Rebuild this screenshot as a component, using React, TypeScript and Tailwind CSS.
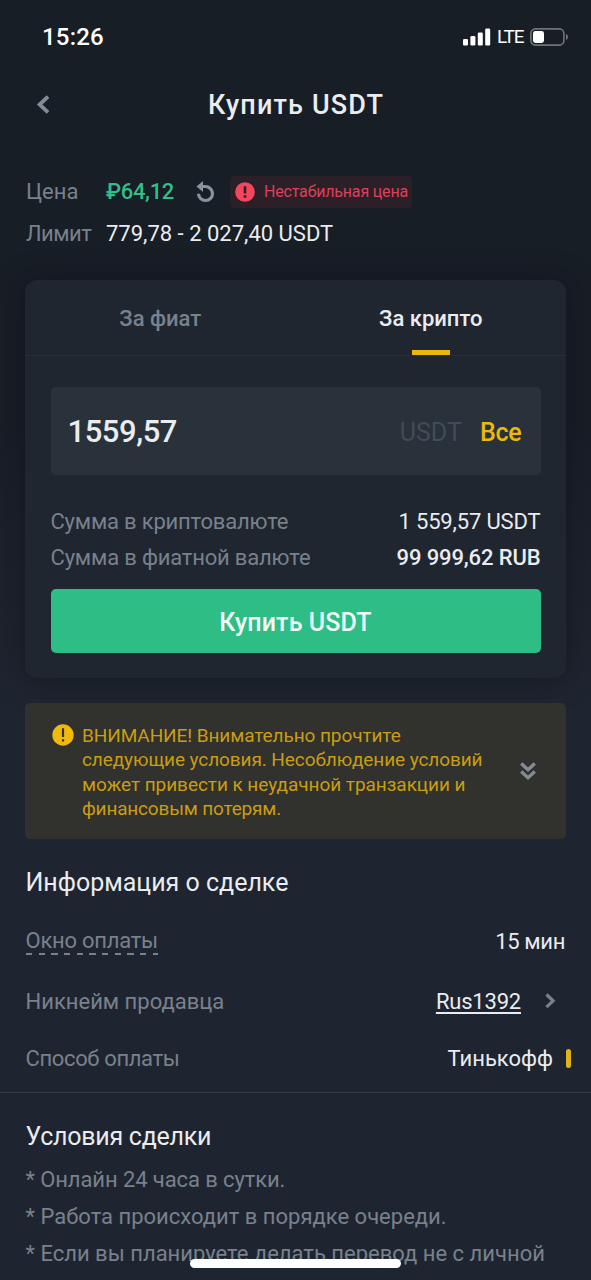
import { useState } from "react";

type Tab = "fiat" | "crypto";

const terms = [
  { text: "* Онлайн 24 часа в сутки.", tracking: "tracking-[-0.1px]" },
  { text: "* Работа происходит в порядке очереди.", tracking: "tracking-normal" },
  { text: "* Если вы планируете делать перевод не с личной", tracking: "tracking-normal" },
];

function StatusBar() {
  return (
    <div className="flex h-[74px] shrink-0 items-center justify-between pl-[42px] pr-[23px] text-white">
      <span className="text-2xl font-medium tracking-[0.2px]">15:26</span>
      <div className="flex items-center">
        <svg width="28" height="18" viewBox="0 0 28 18" fill="currentColor">
          <rect x="0" y="11" width="5" height="6.5" rx="1.3" />
          <rect x="7.4" y="8" width="5" height="9.5" rx="1.3" />
          <rect x="14.8" y="4.5" width="5" height="13" rx="1.3" />
          <rect x="22.2" y="0.5" width="5" height="17" rx="1.3" />
        </svg>
        <span className="ml-[6px] w-[27px] text-[19px] tracking-[-1.1px]">LTE</span>
        <svg className="ml-[6px]" width="38" height="18" viewBox="0 0 38 18" fill="none">
          <rect x="0.9" y="0.9" width="33" height="16.2" rx="4.5" stroke="#6f747b" strokeWidth="1.6" />
          <rect x="3" y="3" width="11" height="12" rx="2.4" fill="#fff" />
          <path d="M36 6v6c1.3-.5 2-1.7 2-3s-.7-2.5-2-3z" fill="#6f747b" />
        </svg>
      </div>
    </div>
  );
}

function Header() {
  return (
    <div className="grid h-[62px] shrink-0 grid-cols-[60px_1fr_60px] items-center">
      <button className="pl-9 text-[#848b96]">
        <svg width="14" height="20" viewBox="0 0 14 20" fill="none" stroke="currentColor" strokeWidth="3.8">
          <path d="M12 1.6 3.6 9.5l8.400 7.900" />
        </svg>
      </button>
      <h1 className="pl-px text-center text-[27px] font-medium tracking-[1.15px] text-[#eaecef]">Купить USDT</h1>
    </div>
  );
}

function PriceInfo() {
  return (
    <div className="mt-[35px] shrink-0 pl-[26px]">
      <div className="flex h-[41px] items-center text-[22px]">
        <span className="w-[80px] text-[#78818c]">Цена</span>
        <span className="w-[89px] font-medium tracking-[-0.35px] text-[#33bd87]">₽64,12</span>
        <svg width="20" height="22" viewBox="0 0 20 22" fill="none">
          <path d="M5 5.500h5.500a7 7 0 1 1-7 7.300" stroke="#8b929c" strokeWidth="3.200" />
          <path d="M8 0v11L1.500 5.500z" fill="#8b929c" />
        </svg>
        <div className="ml-[15px] flex h-[32px] items-center rounded-sm bg-[#2b2028] pl-[5px] pr-1 text-base text-[#dd4058]">
          <svg width="20" height="20" viewBox="0 0 20 20">
            <circle cx="10" cy="10" r="9.800" fill="#f6465d" />
            <path d="M8.700 4.200h2.600v7.200H8.700zM8.700 13.200h2.600v2.500H8.700z" fill="#2d2028" />
          </svg>
          <span className="ml-[9px] pt-px tracking-[-0.18px]">Нестабильная цена</span>
        </div>
      </div>
      <div className="flex h-[43px] items-center text-[22px]">
        <span className="w-[80px] tracking-[-0.5px] text-[#78818c]">Лимит</span>
        <span className="text-[#eaecef]">779,78 - 2 027,40 USDT</span>
      </div>
    </div>
  );
}

function TradeCard() {
  const [tab, setTab] = useState<Tab>("crypto");
  const [amount, setAmount] = useState("1559,57");

  return (
    <div className="mx-[25px] mt-[25px] h-[398px] shrink-0 rounded-xl bg-[#1f2630] shadow-[0_2px_28px_rgba(10,14,19,0.5)]">
      <div className="grid h-[76px] grid-cols-2 border-b border-[#262e38] text-[22px] font-medium">
        <button
          onClick={() => setTab("fiat")}
          className={`flex flex-col items-center ${tab === "fiat" ? "text-[#eaecef]" : "text-[#78818c]"}`}
        >
          <span className="h-[70px] leading-[78px]">За фиат</span>
          {tab === "fiat" && <span className="h-[5px] w-[38px] bg-[#e9b90f]" />}
        </button>
        <button
          onClick={() => setTab("crypto")}
          className={`flex flex-col items-center ${tab === "crypto" ? "text-[#eaecef]" : "text-[#78818c]"}`}
        >
          <span className="h-[70px] leading-[78px]">За крипто</span>
          {tab === "crypto" && <span className="h-[5px] w-[38px] bg-[#e9b90f]" />}
        </button>
      </div>

      <div className="px-[25.5px] pt-[31px]">
        <div className="flex h-[88px] items-center rounded-[5px] bg-[#29313b] pl-[17px] pr-[19px] pt-[3px]">
          <input
            value={amount}
            onChange={(e) => setAmount(e.target.value)}
            className="min-w-0 flex-1 bg-transparent text-[31px] font-medium tracking-[-0.45px] text-[#eaecef] outline-none"
          />
          <span className="text-[25px] text-[#434b56]">USDT</span>
          <button className="ml-[18px] text-[25px] font-medium tracking-[-0.2px] text-[#e9b90f]">Все</button>
        </div>

        <div className="mt-[29px] text-[22px]">
          <div className="flex h-[35px] items-center justify-between">
            <span className="tracking-[-0.2px] text-[#78818c]">Сумма в криптовалюте</span>
            <span className="tracking-[-0.15px] text-[#eaecef]">1 559,57 USDT</span>
          </div>
          <div className="flex h-[36px] items-center justify-between">
            <span className="tracking-[-0.18px] text-[#78818c]">Сумма в фиатной валюте</span>
            <span className="font-medium tracking-[-0.12px] text-[#eaecef]">99 999,62 RUB</span>
          </div>
        </div>

        <button className="mt-[14px] h-[64px] w-full rounded-[5px] bg-[#2ebd85] pt-[3px] text-[25px] font-medium tracking-[0.1px] text-[#f0fbf6]">
          Купить USDT
        </button>
      </div>
    </div>
  );
}

function Warning() {
  return (
    <div className="mx-[25px] mt-[25px] flex h-[136px] shrink-0 rounded-[5px] bg-[#31312d] pl-[27px] pt-[20px]">
      <svg className="mt-px" width="22" height="22" viewBox="0 0 22 22">
        <circle cx="11" cy="11" r="10.700" fill="#f0b90b" />
        <path d="M9.900 4.200h2.200v8.800H9.900zM9.900 15.200h2.200v2.400H9.900z" fill="#31312d" />
      </svg>
      <p className="ml-2 w-[438px] whitespace-nowrap pt-[0.5px] text-[19px] leading-[24.6px] tracking-[-0.09px] text-[#c99d14]">
        ВНИМАНИЕ! Внимательно прочтите
        <br />
        следующие условия. Несоблюдение условий
        <br />
        <span className="tracking-[-0.05px]">может привести к неудачной транзакции и</span>
        <br />
        <span className="tracking-[-0.18px]">финансовым потерям.</span>
      </p>
      <svg className="mt-[39px]" width="16" height="19" viewBox="0 0 16 19" fill="none" stroke="#848b96" strokeWidth="3.400">
        <path d="m1.200 1.600 6.800 6.200 6.800-6.200M1.200 9.600 8 15.800l6.800-6.200" />
      </svg>
    </div>
  );
}

function DealInfo() {
  return (
    <div className="shrink-0 border-b border-[#353e48] pl-[25.5px] text-[22px] text-[#eaecef]">
      <h2 className="mt-[25px] h-[38px] text-[25px] leading-[38px]">Информация о сделке</h2>
      <div className="mt-[19px] flex h-[40px] items-center justify-between pr-[26px]">
        <div className="pb-px text-[#78818c]">
          <div className="h-[27px] leading-[30px] tracking-[-0.25px]">Окно оплаты</div>
          <div className="h-[2px] bg-[repeating-linear-gradient(90deg,#78818c_0_6.4px,transparent_6.4px_12.65px)]" />
        </div>
        <span className="tracking-[-0.35px]">15 мин</span>
      </div>
      <div className="mt-[20px] flex h-[40px] items-center pr-[35px]">
        <span className="flex-1 text-[#78818c]">Никнейм продавца</span>
        <a className="tracking-[-0.2px] underline decoration-2 underline-offset-[3px]">Rus1392</a>
        <svg className="ml-[24px]" width="11" height="16" viewBox="0 0 11 16" fill="none" stroke="#78818c" strokeWidth="3.200">
          <path d="m1.500 1.500 6.600 6.300-6.600 6.300" />
        </svg>
      </div>
      <div className="mt-[17px] flex h-[40px] items-center pr-[20px]">
        <span className="flex-1 tracking-[-0.36px] text-[#78818c]">Способ оплаты</span>
        <span>Тинькофф</span>
        <span className="ml-[13px] h-[19px] w-[5px] rounded-full bg-[#e0b416]" />
      </div>
      <div className="h-[14px]" />
    </div>
  );
}

function Terms() {
  return (
    <div className="shrink-0 px-[25.5px]">
      <h2 className="mt-[25px] h-[38px] text-[25px] leading-[38px] tracking-[-0.25px] text-[#eaecef]">Условия сделки</h2>
      <div className="mt-[6px] text-[22px] text-[#78818c]">
        {terms.map((item) => (
          <p key={item.text} className={`h-[36.8px] whitespace-nowrap leading-[36.8px] ${item.tracking}`}>
            {item.text}
          </p>
        ))}
      </div>
    </div>
  );
}

export default function App() {
  return (
    <div className="relative flex h-[1280px] w-[591px] flex-col overflow-hidden bg-[linear-gradient(#181e26_0px,#181e26_420px,#1f2530_690px)] font-['Roboto','Liberation_Sans',sans-serif]">
      <StatusBar />
      <Header />
      <PriceInfo />
      <TradeCard />
      <Warning />
      <DealInfo />
      <Terms />
      <div className="absolute bottom-[12px] left-[190px] h-[9px] w-[211px] rounded-full bg-white" />
    </div>
  );
}
